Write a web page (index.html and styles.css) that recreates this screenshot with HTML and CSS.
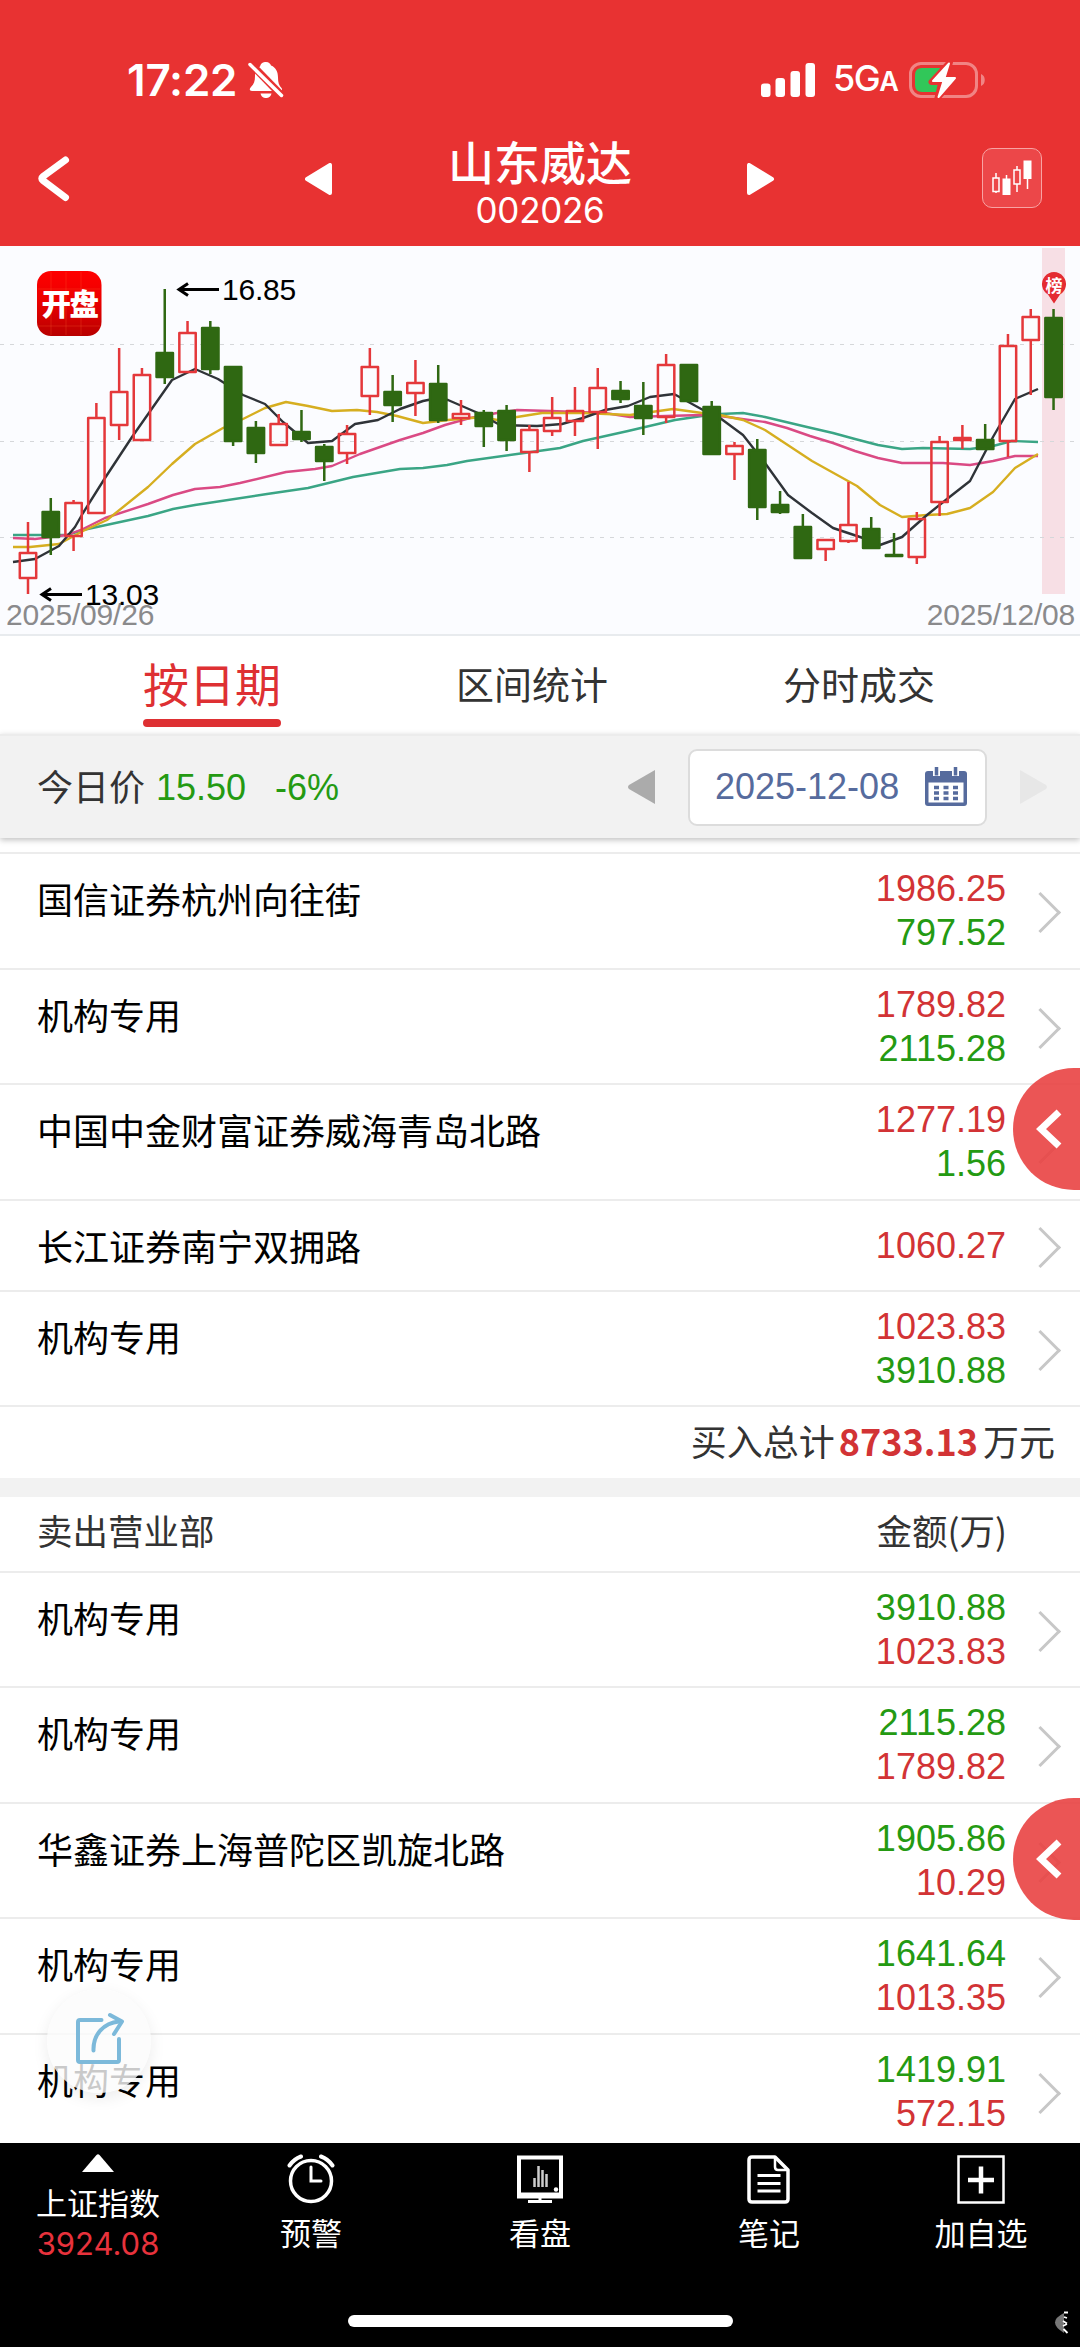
FILE: index.html
```html
<!DOCTYPE html>
<html lang="zh-CN">
<head>
<meta charset="utf-8">
<title>山东威达 002026</title>
<link rel="stylesheet" href="styles.css">
</head>
<body>
<header class="header">
  <div class="status">
    <span class="time">17:22</span>
    <svg class="bell" width="36" height="38" viewBox="0 0 36 38"><path fill="#fff" d="M12 5.500C13 2 15 1 18 1c3 0 4.500 2 5 3.500 5 2 7 6.500 7 12 0 5 1 8 3.500 10.500 1.500 2.500-.500 3-2 3H4c-2.500 0-3-2-1-4 3-3 4-6 4-11 0-4 2-8 5-9.500zM12.500 32.500h11c-1 3.500-3 4.500-5.500 4.500s-4.500-1-5.500-4.500z"/><path d="M0 0l36 37" stroke="#e83232" stroke-width="7.500"/><path d="M2 3.500l31.500 31" stroke="#fff" stroke-width="3.500" stroke-linecap="round"/></svg>
    <svg class="signal" width="54" height="35" viewBox="0 0 54 35" fill="#fff"><rect y="20.500" width="9.500" height="13.500" rx="3"/><rect x="14.500" y="15" width="9.500" height="19" rx="3"/><rect x="29.500" y="8" width="9.500" height="26" rx="3"/><rect x="44.500" width="9.500" height="34" rx="3"/></svg>
    <span class="network">5G<small>A</small></span>
    <svg class="battery" width="77" height="40" viewBox="0 0 77 40"><rect x="1.500" y="3.500" width="66" height="33" rx="10.500" fill="none" stroke="#fff" stroke-opacity=".4" stroke-width="3"/><path d="M72 14v12c5-1.500 5-10.500 0-12z" fill="#fff" fill-opacity=".4"/><path d="M13 8h18l-3 24H13q-7 0-7-7V15q0-7 7-7z" fill="#31c759"/><path d="M41 2L22.500 22h10L28.500 38 47 17H37z" fill="#fff" stroke="#e83232" stroke-width="6" stroke-linejoin="round"/><path d="M40 3.500L24 21h10.500L29.500 37 46 18H35.500z" fill="#fff" stroke="#fff" stroke-width="2" stroke-linejoin="round"/></svg>
  </div>
  <nav class="nav">
    <a class="back"><svg width="38" height="50" viewBox="0 0 38 50"><path d="M29.500 6L7 22.500q-2.500 2 0 4L29.500 43.500" fill="none" stroke="#fff" stroke-width="7" stroke-linecap="round"/></svg></a>
    <a class="step"><svg width="28" height="32" viewBox="0 0 28 32"><path d="M25 2v28L2 16z" fill="#fff" stroke="#fff" stroke-width="4" stroke-linejoin="round"/></svg></a>
    <div class="stock"><h1>山东威达</h1><span>002026</span></div>
    <a class="step next"><svg width="28" height="32" viewBox="0 0 28 32"><path d="M2 2v28l23-14z" fill="#fff" stroke="#fff" stroke-width="4" stroke-linejoin="round"/></svg></a>
    <a class="kbtn"><svg width="58" height="58" viewBox="0 0 58 58" fill="#fff" stroke="#fff"><path d="M13 24v5m0 14v1M23.500 26v4M34 17v4m0 14v8M44.500 30v10" stroke-width="1.500"/><path d="M10 29h6v13.500h-6zM31 21h6v14h-6z" fill="none" stroke-width="1.500"/><path stroke="none" d="M19.500 29.500h8V46h-8zM40.500 11.500h8V30h-8z"/></svg></a>
  </nav>
</header>

<section class="chart">
  <svg id="kline" width="1080" height="389" viewBox="0 0 1080 389">
    <defs><linearGradient id="logo" x2="0" y2="1"><stop offset="0" stop-color="#f00"/><stop offset=".45" stop-color="#ec0000"/><stop offset="1" stop-color="#b80000"/></linearGradient></defs>
    <rect class="selected" x="1042" y="2" width="23" height="346"/>
    <path class="grid" d="M0 98.500H1080M0 195.500H1080M0 291.500H1080"/>
    <polyline class="ma" stroke="#3aa585" points="13,289 67,289 83,284 148,270 173,263 195,259 267,248 308,242 353,231 400,223 423,222 447,219 467,215 517,208 560,202 583,195 628,185 675,174 702,170 720,168 743,167 765,171 807,181 833,187 855,193 878,199 902,203 923,202 970,203 993,200 1012,195 1038,196"/>
    <polyline class="ma" stroke="#da4a84" points="13,292 35,293 67,289 83,283 105,272 148,258 173,249 195,243 220,241 240,237 286,226 315,223 332,220 360,208 400,194 423,187 445,179 470,172 497,167 517,164 550,165 605,167 630,171 702,169 720,170 765,176 787,182 810,190 833,197 855,205 878,212 902,217 943,217 970,219 993,215 1015,210 1038,210"/>
    <polyline class="ma" stroke="#d6ae20" points="13,301 30,301 59,298 83,285 107,274 148,241 172,218 195,198 223,182 243,173 265,162 286,156 308,160 332,165 357,164 377,166 397,170 423,177 448,174 483,171 497,174 517,171 542,167 583,167 630,169 673,163 702,167 720,169 743,174 765,184 812,215 857,240 880,259 902,271 927,269 947,268 970,262 993,246 1015,222 1038,208"/>
    <polyline class="ma" stroke="#2f3338" points="13,316 35,313 59,300 75,281 83,267 105,232 132,191 172,134 195,123 218,133 243,149 265,158 283,176 308,197 332,195 355,178 378,174 400,163 423,155 438,152 448,154 478,167 500,179 537,180 562,178 583,172 605,164 628,160 650,151 674,148 703,164 720,172 743,189 765,217 788,249 812,267 833,282 863,292 880,299 902,291 927,269 947,253 970,235 993,191 1015,153 1038,143"/>
    <g id="candles"></g>
    <path class="arrow" d="M219 43.500H180m8-6l-9 6 9 6M82 348.500H43m8-6l-9 6 9 6"/>
    <text class="mark" x="222" y="54">16.85</text>
    <text class="date" x="6" y="378.500">2025/09/26</text>
    <text class="date" x="1075" y="378.500" text-anchor="end">2025/12/08</text>
    <text class="mark" x="85" y="358.500">13.03</text>
    <rect x="37" y="25" width="64.500" height="65" rx="14" fill="url(#logo)"/>
    <path d="M51 26v63M66 26v63M81 26v63M38 43h62M38 80h62" stroke="#f63" stroke-opacity=".25"/>
    <text class="logo" x="69.500" y="69" text-anchor="middle">开盘</text>
    <path d="M1054 57.500l-6-9a12 12 0 1 1 12 0z" fill="#e42c32"/>
    <text class="pin" x="1054" y="46" text-anchor="middle">榜</text>
  </svg>
</section>

<nav class="tabs">
  <a class="tab active">按日期</a><a class="tab">区间统计</a><a class="tab">分时成交</a>
</nav>

<section class="pricebar">
  <span class="label">今日价</span><span class="num down price">15.50</span><span class="num down pct">-6%</span>
  <svg class="prev" width="28" height="34" viewBox="0 0 28 34"><path d="M27 0v34L1 19q-2-2 0-4z" fill="#ababab"/></svg>
  <div class="datebox"><span class="num">2025-12-08</span>
    <svg width="42" height="40" viewBox="0 0 42 40"><path d="M3 4h36q3 0 3 3v29q0 3-3 3H3q-3 0-3-3V7q0-3 3-3z" fill="#566b9d"/><path d="M3.500 15.500h35V35.500h-35z" fill="#fff"/><path d="M11.500 0v9M30.500 0v9" stroke="#fff" stroke-width="7"/><path d="M11.500 0v8.500M30.500 0v8.500" stroke="#566b9d" stroke-width="3.500"/><path d="M9 20.500h5m4.500 0h5m4.500 0h5M9 26h5m4.500 0h5m4.500 0h5M9 31.500h5m4.500 0h5m4.500 0h5" stroke="#566b9d" stroke-width="3.500"/></svg>
  </div>
  <svg class="after" width="28" height="34" viewBox="0 0 28 34"><path d="M0 0v34l26-15q2-2 0-4z" fill="#e7e7e7"/></svg>
</section>

<main class="lists">
  <div class="row"><span class="name">国信证券杭州向往街</span><div class="num amounts"><b class="up">1986.25</b><b class="down">797.52</b></div><i class="more"></i></div>
  <div class="row"><span class="name">机构专用</span><div class="num amounts"><b class="up">1789.82</b><b class="down">2115.28</b></div><i class="more"></i></div>
  <div class="row"><span class="name">中国中金财富证券威海青岛北路</span><div class="num amounts"><b class="up">1277.19</b><b class="down">1.56</b></div><i class="more"></i></div>
  <div class="row single"><span class="name">长江证券南宁双拥路</span><div class="num amounts"><b class="up">1060.27</b></div><i class="more"></i></div>
  <div class="row"><span class="name">机构专用</span><div class="num amounts"><b class="up">1023.83</b><b class="down">3910.88</b></div><i class="more"></i></div>
  <div class="total">买入总计<strong>8733.13</strong>万元</div>
  <div class="head"><span>卖出营业部</span><span>金额(万)</span></div>
  <div class="row"><span class="name">机构专用</span><div class="num amounts"><b class="down">3910.88</b><b class="up">1023.83</b></div><i class="more"></i></div>
  <div class="row"><span class="name">机构专用</span><div class="num amounts"><b class="down">2115.28</b><b class="up">1789.82</b></div><i class="more"></i></div>
  <div class="row"><span class="name">华鑫证券上海普陀区凯旋北路</span><div class="num amounts"><b class="down">1905.86</b><b class="up">10.29</b></div><i class="more"></i></div>
  <div class="row"><span class="name">机构专用</span><div class="num amounts"><b class="down">1641.64</b><b class="up">1013.35</b></div><i class="more"></i></div>
  <div class="row"><span class="name">机构专用</span><div class="num amounts"><b class="down">1419.91</b><b class="up">572.15</b></div><i class="more"></i></div>
</main>

<a class="drawer upper"><svg width="26" height="40" viewBox="0 0 26 40"><path d="M23 3L5 20l18 17" fill="none" stroke="#fff" stroke-width="7"/></svg></a>
<a class="drawer lower"><svg width="26" height="40" viewBox="0 0 26 40"><path d="M23 3L5 20l18 17" fill="none" stroke="#fff" stroke-width="7"/></svg></a>
<a class="share"><svg width="50" height="52" viewBox="0 0 50 52" fill="none" stroke="#7cb9da" stroke-width="4" stroke-linecap="round" stroke-linejoin="round"><path d="M26.500 8H5q-2 0-2 2v38q0 2 2 2h37q2 0 2-2V27"/><path d="M18.500 38.500C18 22 29 11 44 9.500"/><path d="M35 3l12 6.500-8 12.500"/></svg></a>

<footer class="footer">
  <div class="item index"><svg width="32" height="18" viewBox="0 0 32 18"><path d="M14.500 1q1.500-1.500 3 0L32 18H0z" fill="#fff"/></svg><span>上证指数</span><em>3924.08</em></div>
  <div class="item"><svg width="50" height="50" viewBox="0 0 50 50" fill="none" stroke="#fff" stroke-width="3.500" stroke-linecap="round"><circle cx="25" cy="27" r="20.500"/><path d="M3.500 11.500Q8 5 15 2.500M46.500 11.500Q42 5 35 2.500" stroke-width="4"/><path d="M25 13v14h10" stroke-width="3"/></svg><span>预警</span></div>
  <div class="item"><svg width="50" height="50" viewBox="0 0 50 50" fill="none" stroke="#fff"><path d="M4 3.500h42v39H4z" stroke-width="4"/><path d="M4 41h42" stroke-width="5"/><path d="M25 43v4M13 47.500h24" stroke-width="3"/><path d="M19.500 24v9M23.500 12v21M27.500 16v17M31.500 20v13" stroke-width="2.500" stroke="#ccc"/><circle cx="41" cy="35.500" r="2.200" fill="#fff" stroke="none"/></svg><span>看盘</span></div>
  <div class="item"><svg width="50" height="50" viewBox="0 0 50 50" fill="none" stroke="#fff" stroke-width="3.500" stroke-linejoin="round"><path d="M8 3h23l13 13v29q0 3-3 3H8q-3 0-3-3V6q0-3 3-3z"/><path d="M31 3v10q0 3 3 3h10" stroke-width="2.500"/><path d="M13.500 21.500h23M13.500 29.500h23M13.500 37h23" stroke-width="3"/></svg><span>笔记</span></div>
  <div class="item"><svg width="50" height="50" viewBox="0 0 50 50" fill="none" stroke="#fff"><path d="M2.500 2.500h45v46h-45z" stroke-width="2.500"/><path d="M25 12.500v27M12 26h26" stroke-width="4.500"/></svg><span>加自选</span></div>
  <div class="home"></div>
  <svg class="peek" width="15" height="24" viewBox="0 0 15 24"><path d="M10 2Q-8 11 10 22z" fill="#777"/><path d="M10 1.500h4M10 6l3 1M9 10l4 2.500M9 15l4-2M9.500 18l4 4" fill="none" stroke="#fff" stroke-width="1.800"/></svg>
</footer>
<script src="chart.js"></script>
</body>
</html>
```
FILE: styles.css
```css
* { box-sizing: border-box; }
body {
  margin: 0;
  width: 1080px;
  height: 2347px;
  position: relative;
  overflow: hidden;
  background: #fff;
  color: #000;
  font-family: "Noto Sans CJK SC", sans-serif;
}
svg { display: block; flex: none; }
.num { font-family: "Liberation Sans", Arial, sans-serif; }
.up { color: #d23335; }
.down { color: #249a12; }

.header { height: 246px; background: #e83232; color: #fff; }
.status {
  height: 112px;
  padding: 48px 0 0 127px;
  display: flex;
  align-items: center;
  font-family: Inter, sans-serif;
}
.time { width: 121px; font-size: 44px; font-weight: 600; line-height: 64px; letter-spacing: -.2px; }
.signal { margin-left: 477px; }
.network { width: 76px; margin-left: 18px; font-size: 36px; font-weight: 500; line-height: 64px; letter-spacing: -1.5px; white-space: nowrap; }
.network small { font-size: 27px; font-weight: 600; }

.nav {
  height: 134px;
  display: grid;
  grid-template-columns: 305px 85px 300px 57px 235px 98px;
  align-items: start;
}
.back { padding: 42px 0 0 36px; }
.step { padding-top: 51px; }
.step.next { grid-column: 5; }
.stock { padding-top: 20px; text-align: center; }
.stock h1 { margin: 0; font-size: 46px; font-weight: 500; line-height: 56px; }
.stock span { display: block; font: 35px/44px Inter, sans-serif; letter-spacing: -.3px; }
.kbtn { width: 60px; height: 60px; margin-top: 36px; border: 1px solid #f8a3a3; border-radius: 10px; background: #ec4749; }

.chart { height: 390px; background: #fbfcff; border-bottom: 2px solid #e8ebee; }
.selected { fill: #f7dfe5; }
.grid { fill: none; stroke: #d5d7da; stroke-width: 1; stroke-dasharray: 4 6; }
.ma { fill: none; stroke-width: 2.4; stroke-linejoin: round; }
.rise { fill: none; stroke: #e4383b; stroke-width: 2.5; stroke-linejoin: round; }
.fall { fill: #2f6812; stroke: #2f6812; stroke-width: 2.5; stroke-linejoin: round; }
.arrow { fill: none; stroke: #000; stroke-width: 3; }
.mark, .date { font: 30px "Liberation Sans", Arial, sans-serif; letter-spacing: -.2px; }
.date { fill: #8a8a8c; }
.logo { font: 900 29.5px "Noto Sans CJK SC", sans-serif; fill: #fff; letter-spacing: -1.5px; }
.pin { font: 700 17px "Noto Sans CJK SC", sans-serif; fill: #fff; }

.tabs { height: 98px; display: grid; grid-template-columns: 424px 216px 438px; justify-items: center; }
.tab { font-size: 38px; line-height: 94px; color: #333; white-space: nowrap; }
.tab.active { position: relative; font-size: 46px; line-height: 92px; color: #de3033; }
.tab.active::after { content: ""; display: block; height: 8px; margin-top: -9px; border-radius: 4px; background: #de3033; }

.pricebar {
  height: 104px;
  padding-left: 37px;
  display: flex;
  align-items: center;
  background: #f2f2f2;
  border-top: 2px solid #ececec;
  box-shadow: 0 2px 6px rgba(0, 0, 0, .25);
  font-size: 36px;
}
.label { width: 119px; color: #333; line-height: 50px; padding-bottom: 4px; }
.price { width: 119px; padding-top: 2px; }
.pct { width: 353px; padding-top: 2px; }
.datebox {
  width: 299px;
  height: 77px;
  margin-left: 32px;
  padding: 0 18px 0 25px;
  display: flex;
  align-items: center;
  justify-content: space-between;
  border: 2px solid #dcdcdc;
  border-radius: 9px;
  background: #fff;
  color: #566b9d;
  white-space: nowrap;
}
.after { margin-left: 33px; }

.lists { padding-top: 14px; }
.row {
  height: 115.5px;
  padding: 14px 25px 0 37px;
  display: flex;
  border-top: 2px solid #ececec;
  font-size: 36px;
}
.name { flex: 1; line-height: 60px; }
.amounts { width: 180px; margin-top: -1px; margin-right: 31px; line-height: 44px; text-align: right; }
.amounts b { display: block; font-weight: 400; }
.more { width: 18px; height: 28px; margin-top: 30px; }
.more::before {
  content: "";
  display: block;
  width: 26px;
  height: 26px;
  margin-left: -11px;
  border: solid #c7c7c7;
  border-width: 3.5px 3.5px 0 0;
  transform: rotate(45deg);
}
.row.single { height: 91px; }
.row.single .amounts { padding-top: 10px; }
.row.single .more { margin-top: 18px; }
.row.single .name { line-height: 60px; }
.total {
  height: 73px;
  padding-right: 25px;
  border-top: 2px solid #ececec;
  text-align: right;
  color: #333;
  font-size: 36px;
  line-height: 67px;
}
.total strong { margin: 0 5px 0 4px; color: #d23335; }
.head {
  height: 92.5px;
  padding: 0 73px 0 37px;
  display: flex;
  justify-content: space-between;
  border-top: 19px solid #f2f2f2;
  color: #333;
  font-size: 35.5px;
  line-height: 65px;
}

.drawer {
  position: absolute;
  left: 1013px;
  width: 67px;
  height: 122px;
  padding: 41px 0 0 23px;
  border-radius: 61px 0 0 61px;
  background: rgba(233, 66, 66, .9);
}
.upper { top: 1068px; }
.lower { top: 1798px; }
.share {
  position: absolute;
  left: 47px;
  top: 1989px;
  width: 104px;
  height: 104px;
  padding: 23px 0 0 28px;
  border-radius: 50%;
  background: rgba(251, 251, 251, .8);
  box-shadow: 0 5px 16px rgba(0, 0, 0, .08);
}

.footer {
  position: absolute;
  left: 0;
  top: 2143px;
  width: 1080px;
  height: 204px;
  display: grid;
  grid-template-columns: 196px 230px 228px 230px 194px;
  background: #000;
  color: #fff;
}
.item { padding-top: 11px; display: flex; flex-direction: column; align-items: center; font-size: 31px; line-height: 40px; }
.item span { margin-top: 8px; }
.index span { margin-top: 10px; }
.index em { margin-top: 3px; font: 31px/38px Inter, sans-serif; letter-spacing: 0; color: #e8323c; }
.home { position: absolute; left: 348px; top: 172px; width: 385px; height: 12px; border-radius: 6px; background: #fff; }
.peek { position: absolute; left: 1054px; top: 168px; }
```
FILE: chart.js
```js
// Each candle: direction (1 rise, 0 fall), high, body top, body bottom, low.
const candles = [
  [1,276,307,332,348],[0,252,266,291,309],[1,254,257,290,305],[1,157,172,267,267],
  [1,102,146,179,194],[1,122,129,194,194],[0,43,107,131,138],[1,75,87,126,126],
  [0,75,82,123,128],[0,121,121,195,200],[0,175,182,207,217],[1,168,178,199,199],
  [0,164,186,193,196],[0,198,201,215,235],[1,179,188,207,218],[1,102,121,150,169],
  [0,129,146,159,176],[1,114,137,147,170],[0,119,138,174,177],[1,154,168,172,179],
  [0,164,167,180,201],[0,159,165,194,205],[1,179,184,206,226],[1,151,172,185,190],
  [1,141,165,175,190],[1,122,142,166,203],[0,135,145,153,157],[0,136,160,172,189],
  [1,108,119,171,177],[0,119,119,155,155],[0,155,161,208,208],[1,196,200,208,234],
  [0,193,204,261,274],[0,245,259,266,268],[0,268,281,312,313],[1,293,294,303,315],
  [1,236,279,295,297],[0,271,283,302,302],[0,287,309,310,310],[1,266,273,311,318],
  [1,190,196,256,270],[1,179,192,194,203],[0,178,194,203,203],[1,88,100,195,211],
  [1,63,71,94,149],[0,63,72,151,164]
];
document.getElementById('candles').innerHTML = candles.map(([rise, high, top, bottom, low], i) => {
  const x = 28 + i * 22.79;
  const half = 8.2;
  return `<path class="${rise ? 'rise' : 'fall'}" d="M${x} ${high}V${top}M${x} ${bottom}V${low}M${x - half} ${top}h${half * 2}V${bottom}h${-half * 2}z"/>`;
}).join('');
```
